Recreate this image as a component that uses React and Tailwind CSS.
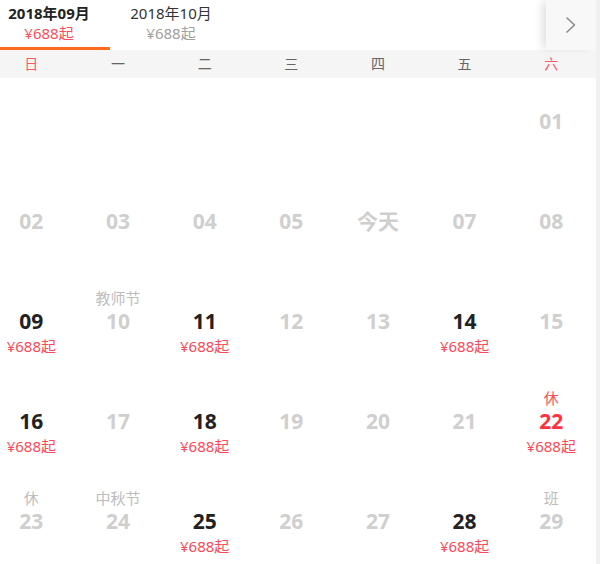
import React from "react";

const FONT = { fontFamily: '"Noto Sans", "Noto Sans CJK SC", sans-serif' };

const WEEK = ["日", "一", "二", "三", "四", "五", "六"];

// t: "on" = bookable, "off" = greyed, "hot" = red weekend highlight
const ROWS = [
  [null, null, null, null, null, null, { d: "01", t: "off" }],
  [
    { d: "02", t: "off" },
    { d: "03", t: "off" },
    { d: "04", t: "off" },
    { d: "05", t: "off" },
    { d: "今天", t: "off" },
    { d: "07", t: "off" },
    { d: "08", t: "off" },
  ],
  [
    { d: "09", t: "on" },
    { d: "10", t: "off", tag: "教师节" },
    { d: "11", t: "on" },
    { d: "12", t: "off" },
    { d: "13", t: "off" },
    { d: "14", t: "on" },
    { d: "15", t: "off" },
  ],
  [
    { d: "16", t: "on" },
    { d: "17", t: "off" },
    { d: "18", t: "on" },
    { d: "19", t: "off" },
    { d: "20", t: "off" },
    { d: "21", t: "off" },
    { d: "22", t: "hot", tag: "休" },
  ],
  [
    { d: "23", t: "off", tag: "休" },
    { d: "24", t: "off", tag: "中秋节" },
    { d: "25", t: "on" },
    { d: "26", t: "off" },
    { d: "27", t: "off" },
    { d: "28", t: "on" },
    { d: "29", t: "off", tag: "班" },
  ],
];

function DayCell({ day }) {
  if (!day) return <div className="w-[86.67px] h-[100px] shrink-0" />;
  const numColor =
    day.t === "on" ? "text-[#222]" : day.t === "hot" ? "text-[#ff3340]" : "text-[#cfcfcf]";
  const tagColor = day.t === "hot" ? "text-[#ff4d5a]" : "text-[#bdbdbd]";
  return (
    <div className="w-[86.67px] h-[100px] shrink-0 flex flex-col items-center pt-[10px]">
      <div className={`h-[20px] leading-[20px] text-[15px] ${tagColor}`}>{day.tag || ""}</div>
      <div className={`h-[26px] leading-[26px] text-[21px] font-bold ${numColor}`}>{day.d}</div>
      {day.t !== "off" && (
        <div className="mt-[2px] h-[20px] leading-[20px] text-[15px] text-[#ff4757]">¥688起</div>
      )}
    </div>
  );
}

export default function App() {
  return (
    <div className="w-[600px] h-[564px] overflow-hidden bg-white border-r-4 border-[#f0f0f0]" style={FONT}>
      {/* month tabs */}
      <div className="flex h-[50px] relative">
        <div className="w-[110px] h-[50px] flex flex-col items-center pr-[12px] pt-[3px] border-b-[3px] border-[#ff6a1f]">
          <div className="text-[15px] leading-[20px] font-bold text-[#222]">2018年09月</div>
          <div className="text-[15px] leading-[20px] text-[#ff4d5a]">¥688起</div>
        </div>
        <div className="w-[122px] h-[50px] flex flex-col items-center pt-[3px]">
          <div className="text-[15px] leading-[20px] text-[#333]">2018年10月</div>
          <div className="text-[15px] leading-[20px] text-[#a0a0a0]">¥688起</div>
        </div>
        <div className="flex-1" />
        <div className="w-[50px] h-[50px] bg-[#f8f8f8] shadow-[-6px_0_8px_-2px_rgba(0,0,0,0.12)] flex items-center justify-center">
          <svg width="14" height="18" viewBox="0 0 14 18" fill="none">
            <path d="M3 2 L10.5 9 L3 16" stroke="#8a8a8a" strokeWidth="1.6" strokeLinecap="round" strokeLinejoin="round" />
          </svg>
        </div>
      </div>

      {/* weekdays */}
      <div className="h-[28px] bg-[#f5f5f5] overflow-hidden">
        <div className="flex -ml-[12px]">
          {WEEK.map((w, i) => (
            <div
              key={w}
              className={`w-[86.67px] shrink-0 h-[28px] leading-[28px] text-center text-[14px] ${
                i === 0 || i === 6 ? "text-[#ff5566]" : "text-[#666]"
              }`}
            >
              {w}
            </div>
          ))}
        </div>
      </div>

      {/* days */}
      <div className="overflow-hidden">
        {ROWS.map((row, r) => (
          <div key={r} className="flex -ml-[12px]">
            {row.map((day, i) => (
              <DayCell key={i} day={day} />
            ))}
          </div>
        ))}
      </div>
    </div>
  );
}
